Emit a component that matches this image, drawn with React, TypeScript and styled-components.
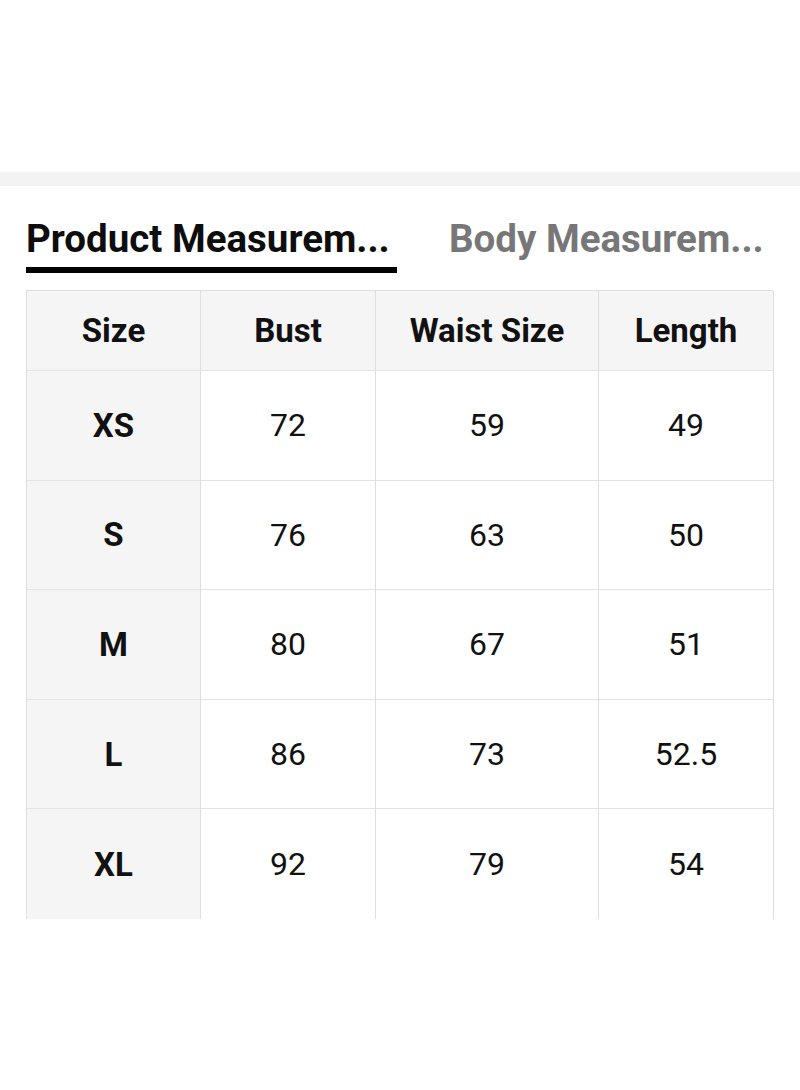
import React from "react"
import styled, { createGlobalStyle } from "styled-components"

const GlobalStyle = createGlobalStyle`
  body {
    margin: 0;
    background: #ffffff;
    font-family: Roboto, "Liberation Sans", sans-serif;
    color: #111111;
  }
`

const Page = styled.div`
  width: 800px;
  height: 1090px;
  padding-top: 172px;
  box-sizing: border-box;
  overflow: hidden;
`

const Band = styled.div`
  height: 14px;
  background: #f3f3f3;
`

const Tabs = styled.div`
  display: flex;
  align-items: flex-start;
  padding: 0 0 0 26px;
  margin-top: 27px;
`

const Tab = styled.div<{ $active?: boolean }>`
  width: ${(p) => (p.$active ? "371px" : "auto")};
  margin-left: ${(p) => (p.$active ? "0" : "52px")};
  font-size: 38.5px;
  font-weight: 700;
  line-height: 52px;
  white-space: nowrap;
  color: ${(p) => (p.$active ? "#0d0d0d" : "#777777")};
  padding-bottom: 2px;
  border-bottom: 6px solid ${(p) => (p.$active ? "#000000" : "transparent")};
`

const Table = styled.div`
  margin: 17px 0 0 26px;
  width: 747px;
  display: grid;
  grid-template-columns: 174px 175px 223px 175px;
  grid-template-rows: 80px repeat(5, 109.6px);
  border-top: 1px solid #dedede;
  border-left: 1px solid #dedede;
  box-sizing: border-box;
`

const Cell = styled.div<{ $head?: boolean; $shade?: boolean; $last?: boolean }>`
  display: flex;
  align-items: center;
  justify-content: center;
  background: ${(p) => (p.$head || p.$shade ? "#f5f5f5" : "#ffffff")};
  border-right: 1px solid #dedede;
  border-bottom: ${(p) => (p.$last ? "none" : "1px solid #e3e3e3")};
  font-size: ${(p) => (p.$head || p.$shade ? "33px" : "32px")};
  font-weight: ${(p) => (p.$head || p.$shade ? 700 : 400)};
  color: #111111;
`

const headers = ["Size", "Bust", "Waist Size", "Length"]

const rows: string[][] = [
  ["XS", "72", "59", "49"],
  ["S", "76", "63", "50"],
  ["M", "80", "67", "51"],
  ["L", "86", "73", "52.5"],
  ["XL", "92", "79", "54"],
]

const App = () => (
  <>
    <GlobalStyle />
    <Page>
      <Band />
      <Tabs>
        <Tab $active>Product Measurem...</Tab>
        <Tab>Body Measurem...</Tab>
      </Tabs>
      <Table>
        {headers.map((h) => (
          <Cell key={h} $head>
            {h}
          </Cell>
        ))}
        {rows.map((row, r) =>
          row.map((value, c) => (
            <Cell
              key={`${r}-${c}`}
              $shade={c === 0}
              $last={r === rows.length - 1}
            >
              {value}
            </Cell>
          ))
        )}
      </Table>
    </Page>
  </>
)

export default App
